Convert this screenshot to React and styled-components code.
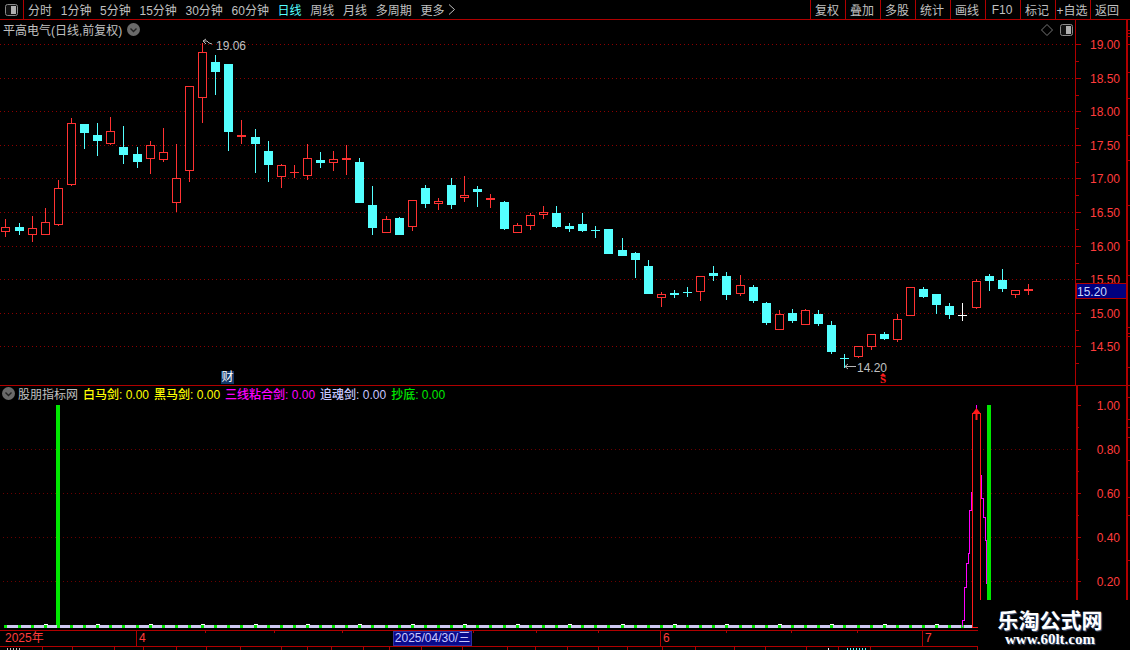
import styled, { createGlobalStyle } from "styled-components";

const RED_LINE = "#b00000";
const RED_TEXT = "#ff3c3c";
const CYAN = "#54ffff";
const GREEN = "#00e800";
const MAGENTA = "#ff00ff";

const GlobalStyle = createGlobalStyle`
  html, body {
    margin: 0;
    padding: 0;
    background: #000;
  }
  body {
    font-family: "Liberation Sans", "Noto Sans CJK SC", sans-serif;
    font-size: 12px;
  }
`;

const Page = styled.div`
  position: relative;
  width: 1130px;
  height: 650px;
  overflow: hidden;
  background: #000;
  color: #c0c0c0;
`;

const Toolbar = styled.div`
  display: flex;
  align-items: stretch;
  height: 19px;
  padding-right: 5px;
  border-bottom: 1px solid ${RED_LINE};
`;
const ToolIcon = styled.div`
  display: flex;
  align-items: center;
  justify-content: center;
  width: 23px;
  border-right: 1px solid ${RED_LINE};
`;
const Tabs = styled.div`
  display: flex;
  align-items: center;
  gap: 8.7px;
  padding-left: 4px;
`;
const Tab = styled.span`
  display: flex;
  align-items: center;
  gap: 4px;
  color: ${(p) => (p.$active ? CYAN : "#c0c0c0")};
`;
const Actions = styled.div`
  display: flex;
  margin-left: auto;
`;
const Action = styled.span`
  display: flex;
  align-items: center;
  justify-content: center;
  width: 35px;
  box-sizing: border-box;
  padding-right: 2px;
  border-left: 1px solid ${RED_LINE};
  white-space: nowrap;
`;

const Panel = styled.div`
  position: relative;
  display: flex;
  height: ${(p) => p.$height}px;
`;
const ChartSvg = styled.svg`
  display: block;
  flex: none;
  overflow: visible;
`;
const Separator = styled.div`
  position: relative;
  height: 1px;
  background: ${RED_LINE};
`;

const Title = styled.div`
  position: absolute;
  top: 1px;
  left: 3px;
  display: flex;
  align-items: center;
  gap: 5px;
  height: 16px;
  color: #c0c0c0;
  white-space: nowrap;
`;
const CornerTools = styled.div`
  position: absolute;
  top: 4px;
  left: 1041px;
  display: flex;
  align-items: center;
  gap: 7px;
`;
const Badge = styled.span`
  position: absolute;
  left: 221px;
  top: 351px;
  width: 13px;
  height: 13px;
  line-height: 13px;
  text-align: center;
  background: #12386a;
  color: #fff;
`;
const Legend = styled.div`
  position: absolute;
  top: -1px;
  left: 2px;
  display: flex;
  align-items: center;
  height: 16px;
  white-space: nowrap;
`;
const LegendName = styled.span`
  margin-left: 3px;
  margin-right: 5px;
  color: #c0c0c0;
`;
const LegendItem = styled.span`
  margin-right: 5px;
  font-weight: 500;
  color: ${(p) => p.$color};
`;

const DateAxis = styled.div`
  position: relative;
  display: flex;
  width: 978px;
  height: 15px;
  border-top: 1px solid ${RED_LINE};
  border-bottom: 1px solid ${RED_LINE};
  color: ${RED_TEXT};
`;
const DateCell = styled.div`
  flex: none;
  width: ${(p) => p.$w}px;
  box-sizing: border-box;
  line-height: 15px;
  padding-left: ${(p) => (p.$mark ? 2 : 5)}px;
  border-left: ${(p) => (p.$mark ? `1px solid ${RED_LINE}` : "none")};
`;
const SelectedDate = styled.div`
  flex: none;
  width: 79px;
  line-height: 15px;
  text-align: center;
  background: #0a0a8c;
  color: #c8c8ff;
  outline: 1px solid #3030a0;
  outline-offset: -1px;
`;
const DateTick = styled.i`
  position: absolute;
  top: 0;
  left: ${(p) => p.$x}px;
  width: 1px;
  height: 2px;
  background: ${RED_LINE};
`;

const StatusStrip = styled.div`
  display: flex;
  width: 978px;
  height: 4px;
  overflow: hidden;
`;
const StatusCell = styled.div`
  flex: none;
  width: ${(p) => p.$w}px;
  box-sizing: border-box;
  padding: 1px 0 0 ${(p) => p.$pad || 0}px;
  border-right: 1px solid ${RED_LINE};
`;
const StatusMark = styled.div`
  width: ${(p) => p.$w}px;
  height: 2px;
  background: repeating-linear-gradient(90deg, ${(p) => p.$color} 0 1px, transparent 1px 3px);
`;

const Watermark = styled.div`
  position: absolute;
  right: 0;
  bottom: 0;
  display: flex;
  flex-direction: column;
  align-items: center;
  width: 152px;
  height: 50px;
  padding-right: 8px;
  box-sizing: border-box;
  background: #000;
`;
const MarkTitle = styled.div`
  margin-top: 8px;
  font-family: "Noto Sans CJK SC", sans-serif;
  font-size: 21px;
  font-weight: 700;
  line-height: 22px;
  color: #fff;
  text-shadow: 1px 1px 1px #4a5a7a;
`;
const MarkUrl = styled.div`
  margin-top: 2px;
  font-family: "Liberation Serif", serif;
  font-size: 15px;
  font-weight: 700;
  line-height: 15px;
  color: #fff;
  text-shadow: 1px 1px 1px #4a5a7a;
`;

const AxisLabel = styled.text`
  fill: ${RED_TEXT};
  font-size: 12px;
  text-anchor: end;
  dominant-baseline: central;
`;
const PriceNote = styled.text`
  fill: #c0c0c0;
  font-size: 12px;
  dominant-baseline: central;
`;
const SignalS = styled.text`
  fill: #ff1a1a;
  font-family: "Liberation Serif", serif;
  font-size: 11px;
  font-weight: 700;
  text-anchor: middle;
  dominant-baseline: central;
`;
const LastPrice = styled.text`
  fill: #c8d8ff;
  font-size: 12px;
  dominant-baseline: central;
`;

// x, kind (r red, c cyan, w white), high, body top, body bottom, low
const CANDLES = [
  [5, "r", 219, 227, 232, 237], [19, "c", 223, 227, 231, 235], [32, "r", 216, 228, 235, 242],
  [45, "r", 208, 222, 235, 235], [58, "r", 180, 188, 225, 226], [71, "r", 118, 123, 185, 186],
  [84, "c", 124, 124, 133, 149], [97, "c", 123, 135, 141, 156], [110, "r", 117, 131, 144, 145],
  [123, "c", 126, 147, 155, 164], [137, "c", 147, 154, 162, 168], [150, "r", 141, 145, 159, 174],
  [163, "r", 128, 152, 160, 162], [176, "r", 144, 178, 203, 212], [189, "r", 86, 86, 171, 182],
  [202, "r", 43, 52, 98, 123], [215, "c", 55, 62, 72, 95], [228, "c", 64, 64, 132, 151],
  [241, "r", 120, 135, 137, 144], [255, "c", 129, 137, 144, 173], [268, "c", 141, 151, 165, 182],
  [281, "r", 164, 165, 177, 188], [294, "r", 165, 172, 173, 178], [307, "r", 144, 158, 176, 180],
  [320, "c", 152, 160, 163, 168], [333, "r", 151, 159, 163, 171], [346, "r", 145, 158, 160, 175],
  [359, "c", 158, 162, 203, 203], [372, "c", 186, 205, 228, 235], [386, "r", 216, 219, 233, 233],
  [399, "c", 217, 218, 235, 235], [412, "r", 200, 200, 227, 231], [425, "c", 185, 188, 204, 208],
  [438, "r", 198, 201, 204, 210], [451, "c", 178, 185, 205, 209], [464, "r", 176, 195, 198, 202],
  [477, "c", 186, 189, 192, 207], [490, "r", 194, 198, 200, 208], [504, "c", 201, 202, 229, 230],
  [517, "r", 223, 225, 233, 233], [530, "r", 213, 215, 226, 230], [543, "r", 206, 212, 215, 219],
  [556, "c", 206, 213, 227, 228], [569, "c", 223, 226, 229, 232], [582, "c", 213, 224, 231, 232],
  [595, "c", 226, 230, 231, 238], [608, "c", 229, 229, 254, 254], [622, "c", 238, 250, 256, 256],
  [635, "c", 252, 253, 260, 278], [648, "c", 260, 266, 294, 294], [661, "r", 292, 294, 298, 307],
  [674, "c", 290, 293, 295, 298], [687, "c", 287, 292, 293, 297], [700, "r", 276, 276, 292, 301],
  [713, "c", 266, 273, 276, 281], [726, "c", 272, 276, 295, 300], [740, "r", 275, 285, 294, 296],
  [753, "c", 285, 287, 301, 303], [766, "c", 302, 303, 323, 325], [779, "r", 310, 314, 330, 330],
  [792, "c", 309, 313, 321, 323], [805, "r", 309, 310, 325, 325], [818, "c", 310, 314, 324, 326],
  [831, "c", 321, 325, 352, 354], [844, "c", 354, 358, 359, 368], [858, "r", 346, 346, 357, 358],
  [871, "r", 334, 334, 347, 350], [884, "c", 332, 334, 339, 340], [897, "r", 314, 319, 340, 342],
  [910, "r", 287, 287, 316, 316], [923, "c", 287, 289, 297, 298], [936, "c", 294, 294, 305, 314],
  [949, "c", 303, 306, 315, 319], [962, "w", 303, 315, 316, 321], [976, "r", 279, 281, 308, 309],
  [989, "c", 274, 276, 281, 291], [1002, "c", 269, 280, 289, 292], [1015, "r", 290, 290, 295, 298],
  [1028, "r", 284, 289, 291, 295],
];

const KIND_COLOR = { r: "#ff3232", c: CYAN, w: "#ffffff" };

const PRICES = [
  ["19.00", 44], ["18.50", 78], ["18.00", 111], ["17.50", 145], ["17.00", 178],
  ["16.50", 212], ["16.00", 246], ["15.50", 279], ["15.00", 313], ["14.50", 346],
];
const RATIOS = [["1.00", 405], ["0.80", 449], ["0.60", 493], ["0.40", 537], ["0.20", 581]];

const STRIP_TICKS_TOP = [30, 33, 36, 44, 72, 98, 135, 160, 205, 240, 275, 327, 333, 336, 367];
const STRIP_TICKS_LOW = [397, 419, 427, 437, 460, 497, 515, 560];

const DATE_TICKS = [205, 274, 342, 473, 536, 598, 726, 791, 857];
const STATUS_STOPS = [43, 73, 115, 144, 177, 207, 241, 282, 308, 332, 364, 390, 422, 463, 508, 536,
  568, 599, 628, 663, 696, 735, 766, 807, 839, 871, 978];

const MAGENTA_PATH = "962.5,627 962.5,620.5 964.5,620.5 964.5,587.5 966.5,587.5 966.5,563.5 968.5,563.5 968.5,553.5 969.5,553.5 969.5,510.5 971.5,510.5 971.5,492.5 972.5,492.5 972.5,477.5 976.5,405 981.5,482.5 981.5,498.5 983.5,498.5 983.5,517.5 985.5,517.5 985.5,540.5 986.5,540.5 986.5,584";

const PanelIcon = () => (
  <svg width="13" height="12" viewBox="0 0 13 12">
    <rect x="0.5" y="0.5" width="12" height="11" rx="2" fill="#111" stroke="#8a8a8a" />
    <rect x="6" y="2" width="5" height="8" fill="#b0b0b0" />
  </svg>
);

const ChevronBadge = () => (
  <svg width="13" height="13" viewBox="0 0 13 13">
    <circle cx="6.5" cy="6.5" r="6.5" fill="#6a6a6a" />
    <path d="M3.5 5.5 L6.5 8.5 L9.5 5.5" fill="none" stroke="#222" strokeWidth="1.4" />
  </svg>
);

const Candle = ({ x, kind, high, top, bottom, low }) => {
  const color = KIND_COLOR[kind];
  const cx = x + 0.5;
  const thin = bottom - top <= 2;
  return (
    <g shapeRendering="crispEdges">
      <line x1={cx} x2={cx} y1={high} y2={low} stroke={color} />
      {thin || kind === "c" ? (
        <rect x={x - 4} y={top} width={9} height={bottom - top} fill={color} />
      ) : (
        <rect x={x - 3.5} y={top + 0.5} width={8} height={bottom - top - 1} fill="#000" stroke={color} />
      )}
    </g>
  );
};

const PriceChart = () => (
  <ChartSvg width="1075" height="365" viewBox="0 20 1075 365">
    {PRICES.map(([label, y]) => (
      <line key={label} x1="0" x2="1075" y1={y + 0.5} y2={y + 0.5} stroke="#8c0000" strokeDasharray="1 3" shapeRendering="crispEdges" />
    ))}
    {CANDLES.map(([x, kind, high, top, bottom, low]) => (
      <Candle key={x} x={x} kind={kind} high={high} top={top} bottom={bottom} low={low} />
    ))}
    <path d="M203 41 H207 L209 43 L212 44 M203 41 L206 39 M203 41 L206 44" fill="none" stroke="#b8b8b8" />
    <PriceNote x="216" y="46">19.06</PriceNote>
    <path d="M845 366.5 H856 M845 366.5 L848 364 M845 366.5 L848 369" fill="none" stroke="#b8b8b8" />
    <PriceNote x="857" y="368">14.20</PriceNote>
    <path d="M880 376 L883 373 L886 376 Z" fill="#ff1a1a" />
    <SignalS x="883" y="379">S</SignalS>
  </ChartSvg>
);

const PriceAxis = () => (
  <ChartSvg width="55" height="365" viewBox="1075 20 55 365">
    <line x1="1075.5" x2="1075.5" y1="20" y2="385" stroke={RED_LINE} />
    <rect x="1126" y="20" width="2" height="365" fill={RED_LINE} />
    {PRICES.map(([label, y]) => (
      <g key={label} shapeRendering="crispEdges">
        <line x1="1076" x2="1081" y1={y + 0.5} y2={y + 0.5} stroke={RED_LINE} />
        <line x1="1076" x2="1079" y1={y + 17.5} y2={y + 17.5} stroke={RED_LINE} />
        <AxisLabel x="1120" y={y + 1}>{label}</AxisLabel>
      </g>
    ))}
    {STRIP_TICKS_TOP.map((y) => (
      <line key={y} x1="1128" x2="1130" y1={y + 0.5} y2={y + 0.5} stroke={RED_LINE} />
    ))}
    <rect x="1076" y="283.5" width="50" height="15" fill="#00007f" stroke={RED_LINE} shapeRendering="crispEdges" />
    <LastPrice x="1077" y="291.5">15.20</LastPrice>
  </ChartSvg>
);

const IndicatorChart = () => (
  <ChartSvg width="1075" height="244" viewBox="0 386 1075 244">
    {RATIOS.slice(1).map(([label, y]) => (
      <line key={label} x1="3" x2="1075" y1={y + 0.5} y2={y + 0.5} stroke="#6a0000" strokeDasharray="1 3" shapeRendering="crispEdges" />
    ))}
    <rect x="56" y="405" width="4" height="222" fill={GREEN} />
    <rect x="4" y="625" width="974" height="3" fill="#ccc8f0" />
    {CANDLES.slice(0, 75).map(([x], i) => (
      <g key={x}>
        {i % 4 === 3 && <rect x={x - 1} y="624" width="4" height="1" fill="#fff" />}
        <rect x={x - 1} y="625" width="3" height="3" fill={GREEN} />
      </g>
    ))}
    <polyline points={MAGENTA_PATH} fill="none" stroke={MAGENTA} shapeRendering="crispEdges" />
    <rect x="972.5" y="413.5" width="8" height="214" fill="#000" stroke="#ff1a1a" shapeRendering="crispEdges" />
    <path d="M972 414 L976.5 408 L981 414 H977.5 V420 H975.5 V414 Z" fill="#ff1a1a" />
    <rect x="987" y="405" width="4" height="222" fill={GREEN} />
  </ChartSvg>
);

const IndicatorAxis = () => (
  <ChartSvg width="55" height="244" viewBox="1075 386 55 244">
    <rect x="1076" y="386" width="2" height="244" fill={RED_LINE} />
    <rect x="1126" y="386" width="2" height="244" fill={RED_LINE} />
    {RATIOS.map(([label, y]) => (
      <g key={label} shapeRendering="crispEdges">
        <line x1="1078" x2="1081" y1={y + 0.5} y2={y + 0.5} stroke={RED_LINE} />
        <line x1="1078" x2="1079" y1={y + 22.5} y2={y + 22.5} stroke={RED_LINE} />
        <AxisLabel x="1120" y={y + 1}>{label}</AxisLabel>
      </g>
    ))}
    {STRIP_TICKS_LOW.map((y) => (
      <line key={y} x1="1128" x2="1130" y1={y + 0.5} y2={y + 0.5} stroke={RED_LINE} />
    ))}
  </ChartSvg>
);

const TABS = ["分时", "1分钟", "5分钟", "15分钟", "30分钟", "60分钟", "日线", "周线", "月线", "多周期"];
const ACTIONS = ["复权", "叠加", "多股", "统计", "画线", "F10", "标记", "+自选", "返回"];

// cells of the cut-off status bar that show a sliver of their text
const STATUS_MARKS = {
  0: { pad: 7, w: 13, color: "#c0c0c0" },
  24: { pad: 21, w: 2, color: "#ffffff" },
  25: { pad: 8, w: 20, color: CYAN },
};

export default function App() {
  return (
    <Page>
      <GlobalStyle />
      <Toolbar>
        <ToolIcon>
          <PanelIcon />
        </ToolIcon>
        <Tabs>
          {TABS.map((t) => (
            <Tab key={t} $active={t === "日线"}>{t}</Tab>
          ))}
          <Tab>
            更多
            <svg width="8" height="11" viewBox="0 0 8 11">
              <path d="M1 0.5 L6.5 5.5 L1 10.5" fill="none" stroke="#c0c0c0" />
            </svg>
          </Tab>
        </Tabs>
        <Actions>
          {ACTIONS.map((a) => (
            <Action key={a}>{a}</Action>
          ))}
        </Actions>
      </Toolbar>

      <Panel $height={365}>
        <PriceChart />
        <PriceAxis />
        <Title>
          平高电气(日线,前复权)
          <ChevronBadge />
        </Title>
        <CornerTools>
          <svg width="12" height="12" viewBox="0 0 12 12">
            <path d="M6 0.5 L11.5 6 L6 11.5 L0.5 6 Z" fill="none" stroke="#777" />
          </svg>
          <PanelIcon />
        </CornerTools>
        <Badge>财</Badge>
      </Panel>
      <Separator />

      <Panel $height={244}>
        <IndicatorChart />
        <IndicatorAxis />
        <Legend>
          <ChevronBadge />
          <LegendName>股朋指标网</LegendName>
          <LegendItem $color="#ffff00">白马剑: 0.00</LegendItem>
          <LegendItem $color="#ffff00">黑马剑: 0.00</LegendItem>
          <LegendItem $color={MAGENTA}>三线粘合剑: 0.00</LegendItem>
          <LegendItem $color="#c8c8ff">追魂剑: 0.00</LegendItem>
          <LegendItem $color={GREEN}>抄底: 0.00</LegendItem>
        </Legend>
      </Panel>

      <DateAxis>
        <DateCell $w={136}>2025年</DateCell>
        <DateCell $w={257} $mark>4</DateCell>
        <SelectedDate>2025/04/30/三</SelectedDate>
        <DateCell $w={188} />
        <DateCell $w={262} $mark>6</DateCell>
        <DateCell $w={56} $mark>7</DateCell>
        {DATE_TICKS.map((x) => (
          <DateTick key={x} $x={x} />
        ))}
      </DateAxis>
      <StatusStrip>
        {STATUS_STOPS.map((stop, i) => (
          <StatusCell key={stop} $w={stop - (i ? STATUS_STOPS[i - 1] : 0)} $pad={STATUS_MARKS[i]?.pad}>
            {STATUS_MARKS[i] && <StatusMark $w={STATUS_MARKS[i].w} $color={STATUS_MARKS[i].color} />}
          </StatusCell>
        ))}
      </StatusStrip>

      <Watermark>
        <MarkTitle>乐淘公式网</MarkTitle>
        <MarkUrl>www.60lt.com</MarkUrl>
      </Watermark>
    </Page>
  );
}
